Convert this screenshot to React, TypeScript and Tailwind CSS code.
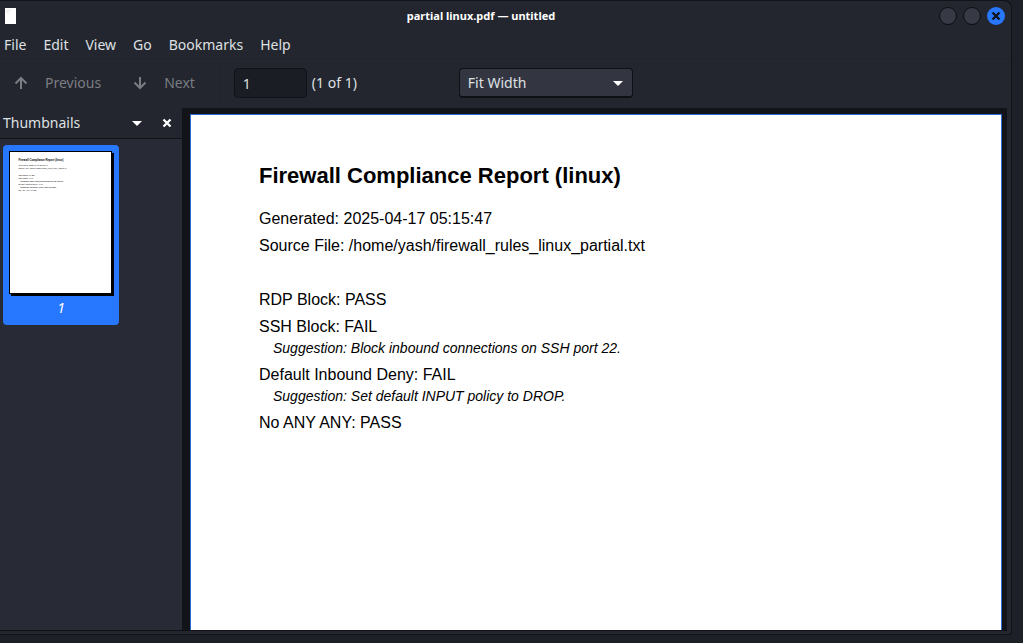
import React from "react";

type Line = { text: string; kind: "title" | "text" | "note" | "blank"; baseline: number };

const lines: Line[] = [
  { kind: "title", text: "Firewall Compliance Report (linux)", baseline: 68 },
  { kind: "text", text: "Generated: 2025-04-17 05:15:47", baseline: 110 },
  { kind: "text", text: "Source File: /home/yash/firewall_rules_linux_partial.txt", baseline: 138 },
  { kind: "blank", text: "", baseline: 165 },
  { kind: "text", text: "RDP Block: PASS", baseline: 192 },
  { kind: "text", text: "SSH Block: FAIL", baseline: 219 },
  { kind: "note", text: "Suggestion: Block inbound connections on SSH port 22.", baseline: 240 },
  { kind: "text", text: "Default Inbound Deny: FAIL", baseline: 266 },
  { kind: "note", text: "Suggestion: Set default INPUT policy to DROP.", baseline: 288 },
  { kind: "text", text: "No ANY ANY: PASS", baseline: 314 },
];

const menus = ["File", "Edit", "View", "Go", "Bookmarks", "Help"];

const lineClass = {
  title: "mb-[15px] text-[22px] leading-7 font-bold",
  text: "text-base leading-[27px]",
  note: "mb-[5px] pl-3.5 text-sm leading-4 italic",
  blank: "h-[27px]",
};

function Arrow({ down = false }: { down?: boolean }) {
  return (
    <svg
      viewBox="0 0 14 14"
      className={down ? "size-3.5 rotate-180" : "size-3.5"}
      fill="none"
      stroke="currentColor"
      strokeWidth="2"
      aria-hidden="true"
    >
      <path d="M7 13V2M1.5 7.5 7 2l5.500 5.500" />
    </svg>
  );
}

function Caret() {
  return (
    <svg viewBox="0 0 10 5" className="h-[5px] w-2.5" fill="currentColor" aria-hidden="true">
      <path d="M0 0h10L5 5z" />
    </svg>
  );
}

function Cross() {
  return (
    <svg viewBox="0 0 10 10" className="size-2.5" stroke="currentColor" strokeWidth="2.3" aria-hidden="true">
      <path d="M1.500 1.500l7 7M8.500 1.500l-7 7" />
    </svg>
  );
}

function PagePreview() {
  return (
    <svg
      viewBox="0 0 812 1130"
      className="h-[141px] w-[101px]"
      aria-hidden="true"
      fontFamily="Liberation Sans, Arial, sans-serif"
    >
      {lines.map((line, i) => (
        <text
          key={i}
          x={line.kind === "note" ? 83 : 69}
          y={line.baseline}
          fontSize={line.kind === "title" ? 22 : line.kind === "note" ? 14 : 16}
          fontWeight={line.kind === "title" ? 700 : 400}
          fontStyle={line.kind === "note" ? "italic" : "normal"}
        >
          {line.text}
        </text>
      ))}
    </svg>
  );
}

export default function App() {
  return (
    <div className="flex h-screen bg-[#1d2027] pr-[11px] pb-2 font-['Noto_Sans',sans-serif] text-sm text-[#dfe0e3]">
      <div className="flex min-w-0 flex-1 flex-col rounded-tr-lg rounded-br-sm border-t border-r border-b border-[#111318] bg-[#23262e]">
        <header className="grid h-[30px] shrink-0 grid-cols-[1fr_auto_1fr] items-center pr-1.5 pl-[5px]">
          <svg viewBox="0 0 11 16" className="h-4 w-[11px]" aria-hidden="true">
            <path fill="#fff" d="M0 0h11v16H0z" />
            <path stroke="#e8e8e8" d="M1 2.500h5M1 4.500h3" />
          </svg>
          <h1 className="pr-12 text-[11px] leading-4 font-bold text-white">partial linux.pdf — untitled</h1>
          <div className="flex justify-end gap-1.5">
            <button aria-label="Minimize" className="size-[18px] rounded-full border border-[#0b0c0f] bg-[#373a45]" />
            <button aria-label="Maximize" className="size-[18px] rounded-full border border-[#0b0c0f] bg-[#373a45]" />
            <button
              aria-label="Close"
              className="flex size-[18px] items-center justify-center rounded-full bg-[#2777ff] text-[#10131a]"
            >
              <Cross />
            </button>
          </div>
        </header>

        <nav className="flex h-7 shrink-0 items-center gap-[17px] border-b border-[#20232a] pl-1">
          {menus.map((menu) => (
            <button key={menu}>{menu}</button>
          ))}
        </nav>

        <div className="flex h-[49px] shrink-0 items-center pb-px pl-3.5">
          <button disabled className="flex items-center gap-[17px] text-[#7b7d83]">
            <Arrow />
            Previous
          </button>
          <button disabled className="ml-8 flex items-center gap-[17px] text-[#7b7d83]">
            <Arrow down />
            Next
          </button>
          <div className="ml-6 h-10 w-px bg-[#20232a]" />
          <input
            aria-label="Page"
            defaultValue="1"
            className="ml-3.5 h-[30px] w-[73px] rounded border border-[#111318] bg-[#1b1d24] px-2"
          />
          <span className="ml-[5px]">(1 of 1)</span>
          <div className="relative ml-[102px] flex w-[174px] items-center">
            <select
              aria-label="Zoom"
              className="h-[30px] w-full appearance-none rounded border border-b-2 border-[#0e1014] bg-[#333641] pl-2"
            >
              <option>Fit Width</option>
            </select>
            <span className="pointer-events-none absolute right-2.5 text-white">
              <Caret />
            </span>
          </div>
        </div>

        <div className="flex min-h-0 flex-1 pr-1 pb-[3px]">
          <aside className="flex w-[182px] shrink-0 flex-col border-b border-[#0e1014]">
            <div className="flex h-[31px] shrink-0 items-center border-b border-[#111318] pr-2.5 pl-[3px]">
              <h2 className="flex-1">Thumbnails</h2>
              <button aria-label="Sidebar view" className="text-white">
                <Caret />
              </button>
              <button aria-label="Close sidebar" className="ml-5 text-white">
                <Cross />
              </button>
            </div>
            <div className="flex-1 bg-[#282b35] pt-1.5 pl-[3px]">
              <button className="flex h-[180px] w-[116px] flex-col items-center rounded-sm bg-[#2777ff] pt-1.5">
                <span className="mr-px border border-black bg-white text-black shadow-[2px_2px_0_#000]">
                  <PagePreview />
                </span>
                <span className="mt-1 leading-5 text-white italic">1</span>
              </button>
            </div>
          </aside>

          <main className="min-w-0 flex-1 overflow-hidden border-b border-[#0e1014] bg-[#121419] pt-1.5 pr-[5px] pl-2">
            <article className="h-full border border-b-0 border-[#2b6cd4] bg-white px-[68px] pt-[47px] font-['Liberation_Sans',Arial,sans-serif] text-black">
              {lines.map((line, i) => (
                <p key={i} className={lineClass[line.kind]}>
                  {line.text}
                </p>
              ))}
            </article>
          </main>
        </div>
      </div>
    </div>
  );
}
